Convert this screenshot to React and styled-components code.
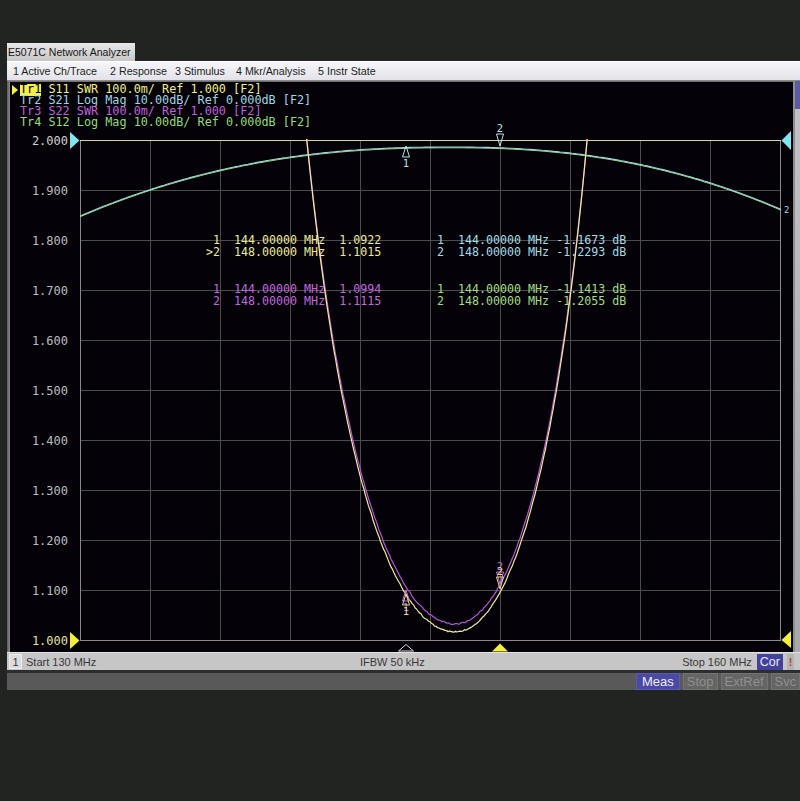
import React from 'react';
import styled, { createGlobalStyle } from 'styled-components';

const Global = createGlobalStyle`
  html, body { margin: 0; padding: 0; background: #222422; }
  body { width: 800px; height: 801px; overflow: hidden; }
`;

const Page = styled.div`
  width: 800px;
  height: 801px;
  box-sizing: border-box;
  padding-top: 43px;
  background: #222422;
`;

const Window = styled.div`
  margin-left: 7px;
  width: 793px;
  display: flex;
  flex-direction: column;
`;

const TitleTab = styled.div`
  width: 128px;
  height: 18px;
  box-sizing: border-box;
  padding-left: 1px;
  background: linear-gradient(#e8e8e8, #c6c6c6);
  font: 10.5px/18px "Liberation Sans", Arial, sans-serif;
  color: #151515;
  white-space: nowrap;
  overflow: hidden;
`;

const MenuBar = styled.div`
  height: 20px;
  box-sizing: border-box;
  display: flex;
  align-items: center;
  padding-left: 6px;
  background: linear-gradient(#f6f6fa, #e2e2e8);
  border-top: 1px solid #ffffff;
  border-bottom: 1px solid #8c8c8c;
`;

const MenuItem = styled.span`
  flex: none;
  width: ${(p) => (p.$w ? `${p.$w}px` : 'auto')};
  font: 10.7px "Liberation Sans", Arial, sans-serif;
  color: #1c1c1c;
  white-space: nowrap;
`;

const Body = styled.div`
  height: 571px;
  display: flex;
`;

const LeftEdge = styled.div`
  width: 3px;
  background: linear-gradient(90deg, #5a5a5a, #8a8a8a);
`;

const Display = styled.div`
  width: 783px;
  box-sizing: border-box;
  border-top: 1px solid #6e6e6e;
  background: #040208;
  display: flex;
  flex-direction: column;
`;

const RightEdge = styled.div`
  width: 2px;
  background: #8e8e8e;
`;

const RightStrip = styled.div`
  width: 5px;
  background: linear-gradient(#5a5aa8 0, #5a5aa8 28px, #c2c2c6 28px, #a8a8ac 100%);
`;

const TraceHeader = styled.div`
  height: 46px;
  box-sizing: border-box;
  padding: 2px 0 0 2px;
`;

const TraceLine = styled.div`
  display: flex;
  align-items: center;
  height: 11px;
  font: 11.8px/11px "DejaVu Sans Mono", "Liberation Mono", monospace;
  color: ${(p) => p.$color};
  white-space: pre;
`;

const Pointer = styled.span`
  width: 0;
  height: 0;
  margin-right: 2px;
  border-top: 5px solid transparent;
  border-bottom: 5px solid transparent;
  border-left: 6px solid ${(p) => (p.$on ? '#f4f040' : 'transparent')};
`;

const TraceId = styled.span`
  background: ${(p) => (p.$active ? '#f2ee4a' : 'transparent')};
  color: ${(p) => (p.$active ? '#000' : 'inherit')};
  padding-bottom: 1px;
`;

const Chart = styled.svg`
  display: block;
  overflow: visible;
`;

const MonoText = styled.text`
  font-family: "DejaVu Sans Mono", "Liberation Mono", monospace;
  font-size: ${(p) => p.$size || 11.65}px;
  white-space: pre;
`;

const StatusBar = styled.div`
  height: 18px;
  box-sizing: border-box;
  display: flex;
  align-items: center;
  padding: 0 6px 0 2px;
  background: #c6c6c6;
  border-top: 1px solid #e2e2e2;
  font: 11px "Liberation Sans", Arial, sans-serif;
  color: #383838;
  white-space: nowrap;
`;

const ChanBox = styled.span`
  width: 13px;
  height: 15px;
  box-sizing: border-box;
  display: flex;
  align-items: center;
  justify-content: center;
  background: #dcdcdc;
  border: 1px solid #eeeeee;
  margin-right: 4px;
`;

const StatusText = styled.span`
  flex: ${(p) => (p.$grow ? 1 : 'none')};
  width: ${(p) => (p.$w ? `${p.$w}px` : 'auto')};
`;

const CorBadge = styled.span`
  margin-left: 5px;
  height: 16px;
  padding: 0 3px;
  display: flex;
  align-items: center;
  background: #42429a;
  color: #e8e8ff;
  font-size: 12.5px;
`;

const WarnBox = styled.span`
  margin-left: 4px;
  width: 7px;
  height: 16px;
  display: flex;
  align-items: center;
  justify-content: center;
  background: #b4b4b4;
  color: #c04030;
  font-size: 11px;
  font-weight: bold;
`;

const Separator = styled.div`
  height: 3px;
  background: #2c2d2c;
`;

const SoftBar = styled.div`
  height: 17px;
  display: flex;
  gap: 3px;
  padding-left: 629px;
  background: #585958;
  overflow: hidden;
`;

const SoftKey = styled.span`
  flex: none;
  height: 17px;
  box-sizing: border-box;
  padding: 0 ${(p) => (p.$active ? 5 : 3)}px;
  font: 13px/17px "Liberation Sans", Arial, sans-serif;
  background: ${(p) => (p.$active ? '#4a4aa2' : '#646564')};
  color: ${(p) => (p.$active ? '#ececff' : '#8e8f8e')};
  border: 1px solid ${(p) => (p.$active ? '#5a5ab4' : '#727372')};
  line-height: 15px;
`;

/* ---------- chart data ---------- */
const Y = '#f0ec9a';
const M = '#b656d6';
const C = '#9ed8dc';
const G = '#94da86';

const traces = [
  { id: 'Tr1', text: ' S11 SWR 100.0m/ Ref 1.000 [F2]', color: '#f2f080', active: true },
  { id: 'Tr2', text: ' S21 Log Mag 10.00dB/ Ref 0.000dB [F2]', color: '#9fd8e2' },
  { id: 'Tr3', text: ' S22 SWR 100.0m/ Ref 1.000 [F2]', color: '#c060d8' },
  { id: 'Tr4', text: ' S12 Log Mag 10.00dB/ Ref 0.000dB [F2]', color: '#92dc72' },
];

const yLabels = ['2.000', '1.900', '1.800', '1.700', '1.600', '1.500', '1.400', '1.300', '1.200', '1.100', '1.000'];

const jitter = (i, seed) => {
  const v = Math.sin(i * 12.9898 + seed * 78.233) * 43758.5453;
  return v - Math.floor(v) - 0.5;
};

const swrY = (x, g0, cl, cr) => {
  const dx = x - 455;
  const g = g0 + (dx < 0 ? cl : cr) * dx * dx;
  if (g >= 0.9) return 0;
  const s = (1 + g) / (1 - g);
  return 640 - (s - 1) * 500;
};

const swrPath = (g0, cl, cr, seed) => {
  const pts = [];
  let i = 0;
  for (let x = 280; x <= 620; x += 1.5, i++) {
    let y = swrY(x, g0, cl, cr);
    if (y < 60) y = 60;
    if (y > 300) y += jitter(i, seed) * 1.3;
    pts.push(`${x.toFixed(1)},${y.toFixed(1)}`);
  }
  return 'M' + pts.join(' L');
};

const logY = (x) => {
  const dx = x - 450;
  return dx < 0 ? 147 + 69 * Math.pow(-dx / 370, 2.3) : 147 + 62 * Math.pow(dx / 330, 2.3);
};

const logPath = (off) => {
  const pts = [];
  for (let x = 80; x <= 782; x += 3) pts.push(`${x},${(logY(x) + off).toFixed(1)}`);
  return 'M' + pts.join(' L');
};

const vLines = [150, 220, 290, 360, 430, 500, 570, 640, 710];
const hLines = [190, 240, 290, 340, 390, 440, 490, 540, 590];

function MarkerUp({ x, y, color, label }) {
  return (
    <g>
      <polygon points={`${x},${y} ${x - 3.5},${y + 11} ${x + 3.5},${y + 11}`} fill="none" stroke={color} strokeWidth="1" />
      <MonoText $size={10.5} x={x} y={y + 21} fill={color} textAnchor="middle">{label}</MonoText>
    </g>
  );
}

function MarkerDown({ x, y, color, label }) {
  return (
    <g>
      <polygon points={`${x},${y} ${x - 3.5},${y - 12} ${x + 3.5},${y - 12}`} fill="none" stroke={color} strokeWidth="1" />
      <MonoText $size={10.5} x={x} y={y - 14} fill={color} textAnchor="middle">{label}</MonoText>
    </g>
  );
}

function Plot() {
  return (
    <Chart width="783" height="524" viewBox="10 128 783 524">
      <defs>
        <clipPath id="plotClip">
          <rect x="80" y="139" width="701" height="502" />
        </clipPath>
      </defs>

      {/* grid */}
      <g stroke="#4c4c4c" strokeWidth="1" shapeRendering="crispEdges">
        {vLines.map((x) => (
          <line key={`v${x}`} x1={x + 0.5} y1="140" x2={x + 0.5} y2="640" />
        ))}
        {hLines.map((y) => (
          <line key={`h${y}`} x1="80" y1={y + 0.5} x2="780" y2={y + 0.5} />
        ))}
      </g>
      <g stroke="#8a8a8a" strokeWidth="1" shapeRendering="crispEdges">
        <line x1="80.5" y1="140" x2="80.5" y2="640" />
        <line x1="780.5" y1="140" x2="780.5" y2="641" />
        <line x1="80" y1="640.5" x2="781" y2="640.5" />
      </g>
      <line x1="80" y1="140.5" x2="781" y2="140.5" stroke="#d8d49e" strokeWidth="1" shapeRendering="crispEdges" />

      {/* y axis labels */}
      {yLabels.map((t, i) => (
        <MonoText
          key={t}
          $size={12}
          x="68"
          y={140 + i * 50 + 4.5}
          textAnchor="end"
          fill={i === 10 ? '#e6e29a' : i === 0 ? '#d0d0d0' : '#bcbcbc'}
        >
          {t}
        </MonoText>
      ))}

      {/* scale reference triangles */}
      <polygon points="70,132 79.5,140.5 70,149" fill="#7fe6ee" />
      <polygon points="70,632 79.5,640.5 70,649" fill="#f2ee3c" />
      <polygon points="791,131 781.5,140.5 791,150" fill="#7fe6ee" />
      <polygon points="791,631 781.5,640 791,648" fill="#f2ee3c" />

      {/* traces */}
      <g clipPath="url(#plotClip)" fill="none" strokeLinejoin="round">
        <path d={logPath(0.8)} stroke={G} strokeWidth="1" />
        <path d={logPath(0)} stroke={C} strokeWidth="1.1" />
        <path d={swrPath(0.0158, 1.448e-5, 1.82e-5, 7)} stroke={M} strokeWidth="1.2" />
        <path d={swrPath(0.008, 1.48e-5, 1.865e-5, 3)} stroke={Y} strokeWidth="1.2" />
      </g>
      <MonoText $size={9} x="784" y="213" fill={C}>2</MonoText>

      {/* trace markers */}
      <MarkerUp x={406} y={146} color="#b8e6e6" label="1" />
      <MarkerDown x={500} y={146} color="#b8e6e6" label="2" />
      <MarkerUp x={406} y={590} color="#c070d8" label="1" />
      <MarkerDown x={500} y={584} color="#c070d8" label="2" />
      <MarkerUp x={406} y={594} color="#e8d890" label="1" />
      <MarkerDown x={500} y={589} color="#e8d890" label="2" />

      {/* stimulus markers */}
      <polygon points="398.5,651 406,644.5 413.5,651" fill="none" stroke="#dcdcdc" strokeWidth="1" />
      <polygon points="492,651.5 500,643.5 508,651.5" fill="#f2ee3c" />

      {/* marker readouts */}
      <MonoText x="206" y="244" fill="#ece894" xmlSpace="preserve">{' 1  144.00000 MHz  1.0922'}</MonoText>
      <MonoText x="206" y="256" fill="#ece894" xmlSpace="preserve">{'>2  148.00000 MHz  1.1015'}</MonoText>
      <MonoText x="437" y="244" fill="#a4dce4" xmlSpace="preserve">{'1  144.00000 MHz -1.1673 dB'}</MonoText>
      <MonoText x="437" y="256" fill="#a4dce4" xmlSpace="preserve">{'2  148.00000 MHz -1.2293 dB'}</MonoText>
      <MonoText x="206" y="293" fill="#c066dc" xmlSpace="preserve">{' 1  144.00000 MHz  1.0994'}</MonoText>
      <MonoText x="206" y="305" fill="#c066dc" xmlSpace="preserve">{' 2  148.00000 MHz  1.1115'}</MonoText>
      <MonoText x="437" y="293" fill="#a2dc84" xmlSpace="preserve">{'1  144.00000 MHz -1.1413 dB'}</MonoText>
      <MonoText x="437" y="305" fill="#a2dc84" xmlSpace="preserve">{'2  148.00000 MHz -1.2055 dB'}</MonoText>
    </Chart>
  );
}

export default function App() {
  return (
    <Page>
      <Global />
      <Window>
        <TitleTab>E5071C Network Analyzer</TitleTab>
        <MenuBar>
          <MenuItem $w={97}>1 Active Ch/Trace</MenuItem>
          <MenuItem $w={65}>2 Response</MenuItem>
          <MenuItem $w={61}>3 Stimulus</MenuItem>
          <MenuItem $w={82}>4 Mkr/Analysis</MenuItem>
          <MenuItem>5 Instr State</MenuItem>
        </MenuBar>
        <Body>
          <LeftEdge />
          <Display>
            <TraceHeader>
              {traces.map((t) => (
                <TraceLine key={t.id} $color={t.color}>
                  <Pointer $on={t.active} />
                  <TraceId $active={t.active}>{t.id}</TraceId>
                  {t.text}
                </TraceLine>
              ))}
            </TraceHeader>
            <Plot />
          </Display>
          <RightEdge />
          <RightStrip />
        </Body>
        <StatusBar>
          <ChanBox>1</ChanBox>
          <StatusText $w={334}>Start 130 MHz</StatusText>
          <StatusText $grow>IFBW 50 kHz</StatusText>
          <StatusText>Stop 160 MHz</StatusText>
          <CorBadge>Cor</CorBadge>
          <WarnBox>!</WarnBox>
        </StatusBar>
        <Separator />
        <SoftBar>
          <SoftKey $active>Meas</SoftKey>
          <SoftKey>Stop</SoftKey>
          <SoftKey>ExtRef</SoftKey>
          <SoftKey>Svc</SoftKey>
          <SoftKey>2</SoftKey>
        </SoftBar>
      </Window>
    </Page>
  );
}
